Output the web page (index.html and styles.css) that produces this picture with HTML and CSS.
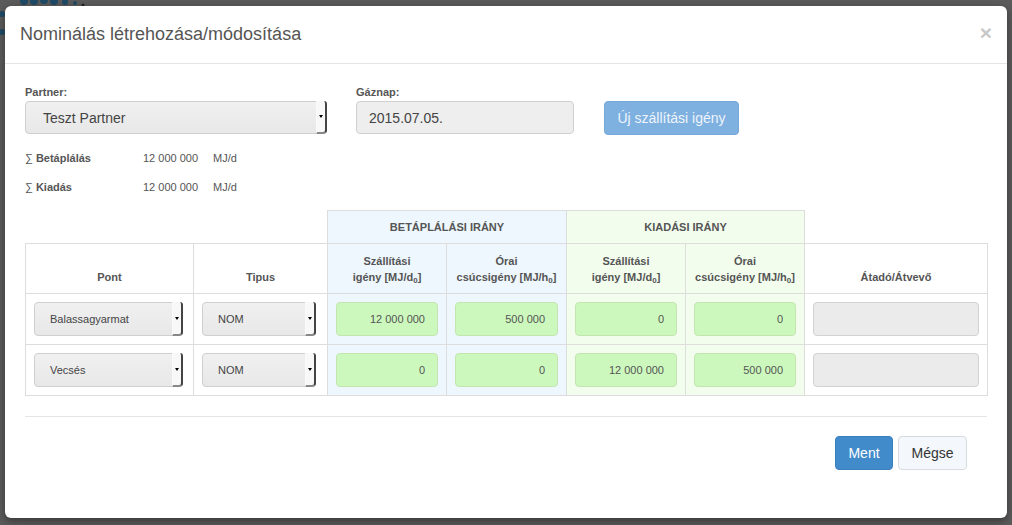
FILE: index.html
```html
<!DOCTYPE html>
<html lang="hu">
<head>
<meta charset="utf-8">
<title>Nominálás</title>
<link rel="stylesheet" href="styles.css">
</head>
<body>
<div class="backdrop-art">
  <svg width="90" height="60" viewBox="0 0 90 60">
    <circle cx="24" cy="1" r="4" fill="#1f4a66"/>
    <circle cx="34" cy="1" r="4" fill="#1f4a66"/>
    <circle cx="44" cy="0" r="4" fill="#1f4a66"/>
    <circle cx="54" cy="1" r="4" fill="#1f4a66"/>
    <circle cx="65" cy="2" r="3" fill="#1f4a66"/>
    <circle cx="75" cy="3" r="2" fill="#1f4a66"/>
    <circle cx="83" cy="5" r="1.5" fill="#222"/>
    <circle cx="2" cy="14" r="3" fill="#1f4a66"/>
    <circle cx="2" cy="32" r="3" fill="#1f4a66"/>
  </svg>
</div>
<div class="page">
  <div class="modal">
    <div class="modal-header">
      <h4 class="modal-title">Nominálás létrehozása/módosítása</h4>
      <span class="close">×</span>
    </div>
    <div class="modal-body">
      <div class="top-row">
        <div class="field field-partner">
          <label class="lbl">Partner:</label>
          <div class="select select-lg"><span class="select-text">Teszt Partner</span><span class="select-btn"><i class="caret"></i></span></div>
        </div>
        <div class="field field-date">
          <label class="lbl">Gáznap:</label>
          <div class="input-lg">2015.07.05.</div>
        </div>
        <div class="field field-btn">
          <button class="btn btn-disabled">Új szállítási igény</button>
        </div>
      </div>
      <div class="sums">
        <div class="sum-row"><span class="sum-label"><span class="sigma">∑</span> Betáplálás</span><span class="sum-val">12 000 000</span><span class="sum-unit">MJ/d</span></div>
        <div class="sum-row"><span class="sum-label"><span class="sigma">∑</span> Kiadás</span><span class="sum-val">12 000 000</span><span class="sum-unit">MJ/d</span></div>
      </div>
      <table class="grid">
        <colgroup>
          <col class="c-pont"><col class="c-tipus"><col class="c-n1"><col class="c-n2"><col class="c-n3"><col class="c-n4"><col class="c-atado">
        </colgroup>
        <thead>
          <tr class="group-row">
            <th class="empty"></th><th class="empty"></th>
            <th colspan="2" class="blue">BETÁPLÁLÁSI IRÁNY</th>
            <th colspan="2" class="green">KIADÁSI IRÁNY</th>
            <th class="empty"></th>
          </tr>
          <tr class="head-row">
            <th>Pont</th>
            <th>Tipus</th>
            <th class="blue">Szállítási<br>igény [MJ/d<sub>0</sub>]</th>
            <th class="blue">Órai<br>csúcsigény [MJ/h<sub>0</sub>]</th>
            <th class="green">Szállítási<br>igény [MJ/d<sub>0</sub>]</th>
            <th class="green">Órai<br>csúcsigény [MJ/h<sub>0</sub>]</th>
            <th>Átadó/Átvevő</th>
          </tr>
        </thead>
        <tbody>
          <tr>
            <td><div class="select select-pont"><span class="select-text">Balassagyarmat</span><span class="select-btn"><i class="caret"></i></span></div></td>
            <td><div class="select select-tipus"><span class="select-text">NOM</span><span class="select-btn"><i class="caret"></i></span></div></td>
            <td class="blue"><div class="num">12 000 000</div></td>
            <td class="blue"><div class="num">500 000</div></td>
            <td class="green"><div class="num">0</div></td>
            <td class="green"><div class="num">0</div></td>
            <td><div class="gray-input"></div></td>
          </tr>
          <tr>
            <td><div class="select select-pont"><span class="select-text">Vecsés</span><span class="select-btn"><i class="caret"></i></span></div></td>
            <td><div class="select select-tipus"><span class="select-text">NOM</span><span class="select-btn"><i class="caret"></i></span></div></td>
            <td class="blue"><div class="num">0</div></td>
            <td class="blue"><div class="num">0</div></td>
            <td class="green"><div class="num">12 000 000</div></td>
            <td class="green"><div class="num">500 000</div></td>
            <td><div class="gray-input"></div></td>
          </tr>
        </tbody>
      </table>
      <div class="modal-footer">
        <button class="btn btn-primary">Ment</button>
        <button class="btn btn-default">Mégse</button>
      </div>
    </div>
  </div>
</div>
</body>
</html>
```
FILE: styles.css
```css
* { box-sizing: border-box; }
html, body { margin: 0; padding: 0; }
body {
  width: 1012px;
  height: 525px;
  overflow: hidden;
  background: #5b5b5b;
  font-family: "Liberation Sans", Arial, sans-serif;
  color: #333;
  position: relative;
}
.backdrop-art { position: absolute; left: 0; top: 0; }
.page { position: relative; padding: 6px 5px 0 5px; }
.modal {
  width: 1002px;
  height: 512px;
  background: #fff;
  border-radius: 6px;
  box-shadow: 0 3px 9px rgba(0,0,0,.4);
}
.modal-header {
  height: 58px;
  border-bottom: 1px solid #e5e5e5;
  padding: 0 15px 0 15px;
  display: flex;
  align-items: center;
}
.modal-title {
  margin: 0;
  font-size: 18px;
  font-weight: normal;
  color: #555;
  padding-top: 0;
}
.close {
  margin-left: auto;
  align-self: flex-start;
  margin-top: 16px;
  color: #c8c8c8;
  font-size: 21px;
  font-weight: bold;
  line-height: 1;
}
.modal-body { padding: 22px 20px 0 20px; }
.top-row { display: flex; align-items: flex-start; }
.field { display: flex; flex-direction: column; }
.field-partner { width: 302px; }
.field-date { width: 218px; margin-left: 29px; }
.field-btn { margin-left: 30px; padding-top: 15px; }
.lbl {
  font-size: 11px;
  font-weight: bold;
  line-height: 13px;
  color: #555;
  margin-bottom: 2px;
}
.select {
  display: flex;
  align-items: stretch;
  background: linear-gradient(#f0f0f0, #e8e8e8);
  border: 1px solid #cfcfcf;
  border-radius: 4px;
  color: #444;
}
.select-text { flex: 1; display: flex; align-items: center; }
.select-btn {
  width: 11px;
  border-left: 1px solid #fafafa;
  background: #f8f8f8;
  border-right: 2px solid #444;
  border-bottom: 2px solid #888;
  border-radius: 0 3px 4px 0;
  display: flex;
  align-items: center;
  justify-content: center;
  margin: -1px -1px -1px 0;
}
.caret {
  width: 0; height: 0;
  border-left: 2.5px solid transparent;
  border-right: 2.5px solid transparent;
  border-top: 3px solid #000;
}
.select-lg { height: 33px; font-size: 14px; }
.select-lg .select-text { padding-left: 17px; }
.input-lg {
  height: 33px;
  background: #eee;
  border: 1px solid #d0d0d0;
  border-radius: 4px;
  font-size: 14px;
  color: #444;
  padding-left: 12px;
  display: flex;
  align-items: center;
}
.btn {
  font-family: "Liberation Sans", Arial, sans-serif;
  font-size: 14px;
  border-radius: 4px;
  height: 34px;
  padding: 0 12px;
  border: 1px solid transparent;
}
.btn-disabled {
  background: #7eb0e0;
  border-color: #76a8da;
  color: #eef5fc;
  width: 135px;
  padding: 0;
}
.sums { margin-top: 17px; }
.sum-row {
  display: flex;
  font-size: 11px;
  line-height: 13px;
  height: 29px;
  color: #555;
}
.sum-label { width: 118px; font-weight: bold; }
.sigma { font-weight: normal; }
.sum-val { width: 64px; }
.sum-unit { margin-left: 6px; }
.grid {
  margin-top: 0;
  width: 962px;
  border-collapse: collapse;
  table-layout: fixed;
  font-size: 11px;
  color: #555;
}
.c-pont { width: 168px; }
.c-tipus { width: 134px; }
.c-n1 { width: 119px; }
.c-n2 { width: 120px; }
.c-n3 { width: 119px; }
.c-n4 { width: 119px; }
.c-atado { width: 183px; }
.grid th, .grid td { border: 1px solid #ddd; }
.grid th.empty { border: none; }
.grid th {
  font-weight: bold;
  text-align: center;
  line-height: 16px;
}
.group-row th { height: 33px; padding: 0; vertical-align: middle; font-size: 11px; }
.head-row th { height: 50px; padding: 0 4px 8px; vertical-align: bottom; }
.grid sub { font-size: 8px; vertical-align: -2px; line-height: 0; }
.grid td { height: 51px; padding: 0 8px; vertical-align: middle; }
.blue { background: #eef7fd; }
.green { background: #f3fdee; }
.select-pont { width: 149px; height: 34px; font-size: 11px; }
.select-pont .select-text { padding-left: 15px; }
.select-tipus { width: 114px; height: 34px; font-size: 11px; }
.select-tipus .select-text { padding-left: 15px; }
.num {
  height: 34px;
  background: #ccf8bd;
  border: 1px solid #c3e6b1;
  border-radius: 4px;
  text-align: right;
  padding-right: 12px;
  line-height: 32px;
  color: #555;
}
.gray-input {
  height: 34px;
  background: #ebebeb;
  border: 1px solid #d2d2d2;
  border-radius: 4px;
}
.modal-footer {
  margin-top: 20px;
  border-top: 1px solid #e5e5e5;
  padding: 19px 20px 0 0;
  display: flex;
  justify-content: flex-end;
  gap: 5px;
}
.btn-primary { background: #428bca; border-color: #3b7fc0; color: #fff; width: 58px; padding: 0; }
.btn-default { background: #f4f8fc; border-color: #d6dbe0; color: #333; width: 69px; padding: 0; }
```
